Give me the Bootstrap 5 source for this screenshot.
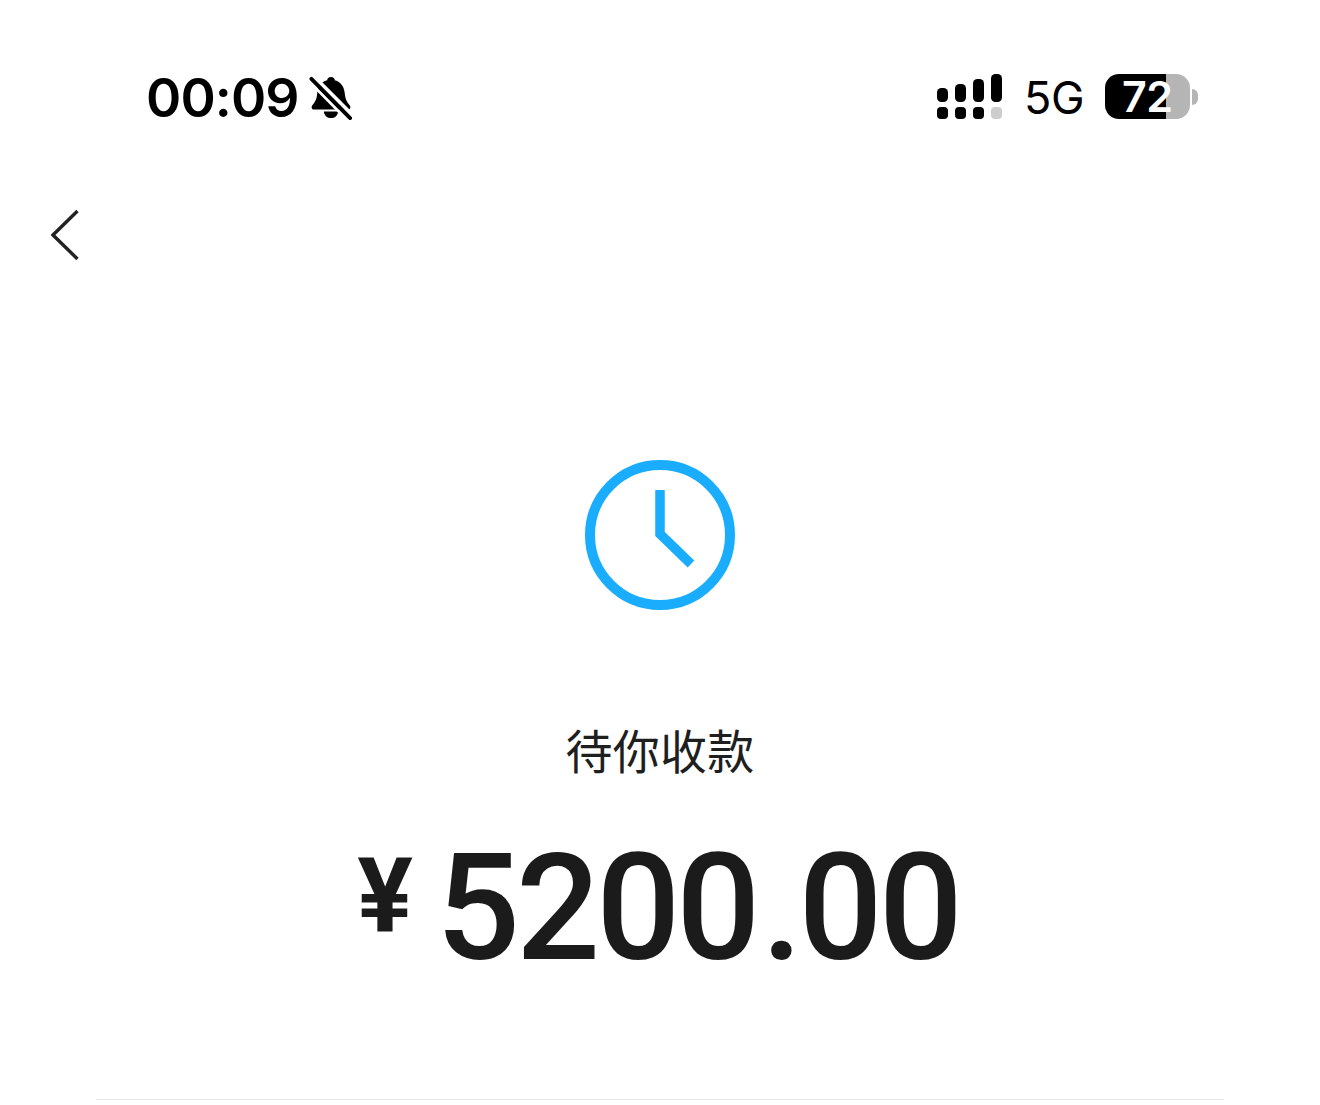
<!DOCTYPE html>
<html lang="zh">
<head>
    <meta charset="utf-8">
    <title>待你收款</title>
    <link rel="stylesheet" href="https://cdn.jsdelivr.net/npm/bootstrap@5.3.0/dist/css/bootstrap.min.css">
    <style>
        html, body { height: 1105px; overflow: hidden; background: #fff; }
        .phone-page { width: 1320px; height: 1105px; color: #1b1b1b; }
        .status-row { height: 45px; margin-top: 74px; padding: 0 122px 0 146px; color: #000; }
        .clock-text { font-family: Inter, "Liberation Sans", sans-serif; font-size: 53.500px; font-weight: 600; line-height: 48px; letter-spacing: -.9px; padding-top: 3px; }
        .net-text { font-family: Inter, "Liberation Sans", sans-serif; font-size: 45px; font-weight: 400; line-height: 48px; margin: 3px 21px 0 22px; letter-spacing: -.5px; }
        .battery-box { width: 85px; height: 45px; border-radius: 14px; background: linear-gradient(90deg, #000 72%, #b5b5b5 72%); color: #fff; font-family: Inter, "Liberation Sans", sans-serif; font-size: 43px; font-weight: 600; line-height: 45px; padding-left: 17px; letter-spacing: -.5px; }
        .battery-tip { width: 6px; height: 16px; margin-left: 2px; background: #b5b5b5; border-radius: 0 6px 6px 0; }
        .back-row { height: 52px; margin-top: 90px; padding-left: 51px; }
        .status-icon { flex: none; }
        .bell-icon { margin-left: 10px; margin-top: 2px; }
        .pay-icon { margin-top: 199px; }
        .pay-label { margin-top: 110px; height: 58px; font-family: "Noto Sans CJK SC", sans-serif; font-size: 47px; font-weight: 400; line-height: 58px; letter-spacing: .2px; color: #1f1f1f; }
        .amount-row { margin-top: 66px; height: 130px; padding-right: 4px; font-family: Roboto, "Liberation Sans", sans-serif; color: #1b1b1b; }
        .yen-mark { font-size: 104px; font-weight: 700; line-height: 90px; margin: 7px 23px 0 0; align-self: flex-start; }
        .amount-num { font-size: 148px; font-weight: 500; line-height: 130px; letter-spacing: -4px; }
        .amount-frac { margin-left: 5px; }
        .foot-rule { margin: 0 96px 5px; height: 1px; background: #e6e6e6; border: 0; opacity: 1; }
    </style>
</head>
<body>
    <div class="phone-page d-flex flex-column">
        <div class="status-row d-flex align-items-center justify-content-between">
            <div class="d-flex align-items-center">
                <span class="clock-text">00:09</span>
                <svg class="status-icon bell-icon" width="44" height="46" viewBox="0 0 46 46">
                    <path d="M23 1c2.500 0 4 1.500 4 3.500C34 6.500 37 12 37.500 19c.4 5 2 8 5 11.500 1.500 2 .5 4.500-1.500 4.500H5c-2 0-3-2.500-1.500-4.500 3-3.500 4.600-6.500 5-11.500.5-7 3.500-12.500 10.500-14.500C19 2.500 20.500 1 23 1z" fill="#000"/>
                    <path d="M15.500 37h15c-.5 4.500-3.700 7-7.500 7s-7-2.500-7.500-7z" fill="#000"/>
                    <path d="M5.500 1 46 41.500" stroke="#fff" stroke-width="4"/>
                    <path d="M0 5.500 40 46" stroke="#fff" stroke-width="3"/>
                    <path d="M2.500 3 43 44" stroke="#000" stroke-width="4" stroke-linecap="round"/>
                </svg>
            </div>
            <div class="d-flex align-items-center">
                <svg class="status-icon" width="66" height="45" viewBox="0 0 66 45">
                    <rect x="1" y="14" width="11" height="14" rx="4.500" fill="#000"/>
                    <rect x="19" y="10" width="11" height="18" rx="4.500" fill="#000"/>
                    <rect x="37" y="5" width="11" height="23" rx="4.500" fill="#000"/>
                    <rect x="55" y="0" width="11" height="28" rx="4.500" fill="#000"/>
                    <rect x="1" y="33" width="11" height="12" rx="4" fill="#000"/>
                    <rect x="19" y="33" width="11" height="12" rx="4" fill="#000"/>
                    <rect x="37" y="33" width="11" height="12" rx="4" fill="#000"/>
                    <rect x="55" y="33" width="11" height="12" rx="4" fill="#cdcdcd"/>
                </svg>
                <span class="net-text">5G</span>
                <div class="battery-box">72</div>
                <div class="battery-tip"></div>
            </div>
        </div>
        <div class="back-row">
            <svg width="30" height="52" viewBox="0 0 30 52"><path d="M26.500 2 2 26l24.500 24" fill="none" stroke="#222" stroke-width="3.400"/></svg>
        </div>
        <div class="pay-icon d-flex justify-content-center">
            <svg width="150" height="150" viewBox="0 0 150 150">
                <circle cx="75" cy="75" r="70" fill="none" stroke="#1aadfd" stroke-width="10"/>
                <path d="M75 30v44l31 30" fill="none" stroke="#1aadfd" stroke-width="9.500"/>
            </svg>
        </div>
        <div class="pay-label text-center">待你收款</div>
        <div class="amount-row d-flex justify-content-center">
            <span class="yen-mark">¥</span>
            <span class="amount-num">5200<span class="amount-frac">.00</span></span>
        </div>
        <hr class="foot-rule mt-auto">
    </div>
    <script src="https://cdn.jsdelivr.net/npm/bootstrap@5.3.0/dist/js/bootstrap.bundle.min.js"></script>
</body>
</html>
